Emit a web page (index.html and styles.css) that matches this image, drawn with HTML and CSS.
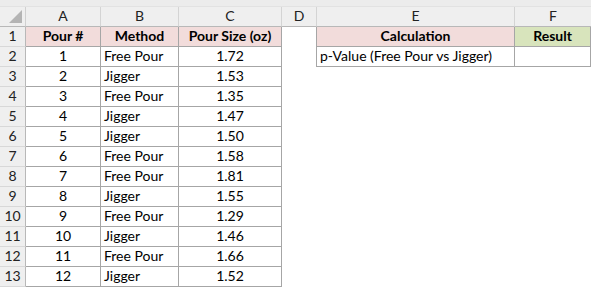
FILE: index.html
```html
<!DOCTYPE html>
<html>
<head>
<meta charset="utf-8">
<link rel="stylesheet" href="styles.css">
</head>
<body>
<div class="strip"></div>
<div class="sheet">
  <div class="corner"><svg class="tri" width="13" height="13" viewBox="0 0 13 13"><polygon points="13,0 13,13 0,13" fill="#b4b4b4"/></svg></div>
  <div class="ch">A</div><div class="ch">B</div><div class="ch">C</div><div class="ch">D</div><div class="ch">E</div><div class="ch last">F</div>

  <div class="rh">1</div>
  <div class="c t hd ctr">Pour #</div><div class="c t hd ctr">Method</div><div class="c t hd ctr">Pour Size (oz)</div>
  <div class="c dt"></div><div class="c t hd ctr">Calculation</div><div class="c t hdg ctr">Result</div>

  <div class="rh">2</div>
  <div class="c t ctr">1</div><div class="c t">Free Pour</div><div class="c t ctr">1.72</div>
  <div class="c dt"></div><div class="c t">p-Value (Free Pour vs Jigger)</div><div class="c t"></div>

  <div class="rh">3</div>
  <div class="c t ctr">2</div><div class="c t">Jigger</div><div class="c t ctr">1.53</div><div class="c"></div><div class="c"></div><div class="c"></div>
  <div class="rh">4</div>
  <div class="c t ctr">3</div><div class="c t">Free Pour</div><div class="c t ctr">1.35</div><div class="c"></div><div class="c"></div><div class="c"></div>
  <div class="rh">5</div>
  <div class="c t ctr">4</div><div class="c t">Jigger</div><div class="c t ctr">1.47</div><div class="c"></div><div class="c"></div><div class="c"></div>
  <div class="rh">6</div>
  <div class="c t ctr">5</div><div class="c t">Jigger</div><div class="c t ctr">1.50</div><div class="c"></div><div class="c"></div><div class="c"></div>
  <div class="rh">7</div>
  <div class="c t ctr">6</div><div class="c t">Free Pour</div><div class="c t ctr">1.58</div><div class="c"></div><div class="c"></div><div class="c"></div>
  <div class="rh">8</div>
  <div class="c t ctr">7</div><div class="c t">Free Pour</div><div class="c t ctr">1.81</div><div class="c"></div><div class="c"></div><div class="c"></div>
  <div class="rh">9</div>
  <div class="c t ctr">8</div><div class="c t">Jigger</div><div class="c t ctr">1.55</div><div class="c"></div><div class="c"></div><div class="c"></div>
  <div class="rh">10</div>
  <div class="c t ctr">9</div><div class="c t">Free Pour</div><div class="c t ctr">1.29</div><div class="c"></div><div class="c"></div><div class="c"></div>
  <div class="rh">11</div>
  <div class="c t ctr">10</div><div class="c t">Jigger</div><div class="c t ctr">1.46</div><div class="c"></div><div class="c"></div><div class="c"></div>
  <div class="rh">12</div>
  <div class="c t ctr">11</div><div class="c t">Free Pour</div><div class="c t ctr">1.66</div><div class="c"></div><div class="c"></div><div class="c"></div>
  <div class="rh">13</div>
  <div class="c t ctr">12</div><div class="c t">Jigger</div><div class="c t ctr">1.52</div><div class="c"></div><div class="c"></div><div class="c"></div>
</div>
</body>
</html>
```

FILE: styles.css
```css
html, body {
  margin: 0;
  padding: 0;
  background: #ffffff;
}
body {
  width: 591px;
  height: 288px;
  overflow: hidden;
  font-family: Lato, "Open Sans", sans-serif;
  font-size: 14px;
  color: #000;
}
.strip {
  height: 6px;
  background: #ececec;
  border-bottom: 1px solid #e2e2e2;
}
.sheet {
  display: grid;
  grid-template-columns: 26px 75px 78px 103px 35px 198px 76px;
  grid-auto-rows: 20px;
}
.corner {
  background: #efefef;
  border-right: 1px solid #d0d0d0;
  border-bottom: 1px solid #b8b8b8;
  display: flex;
  align-items: flex-end;
  justify-content: flex-end;
  padding: 0 3px 3px 0;
}
.tri { display: block; }
.ch {
  background: #efefef;
  border-right: 1px solid #d4d4d4;
  border-bottom: 1px solid #b8b8b8;
  display: flex;
  align-items: flex-end;
  justify-content: center;
  padding-bottom: 2px;
  color: #222;
}
.ch.last { border-right: none; }
.rh {
  background: #efefef;
  border-right: 1px solid #b8b8b8;
  border-bottom: 1px solid #d8d8d8;
  display: flex;
  align-items: flex-end;
  justify-content: center;
  padding-bottom: 2px;
  color: #222;
}
.c {
  display: flex;
  align-items: flex-end;
  padding: 0 3px 2px 3px;
  white-space: nowrap;
  overflow: hidden;
}
.t {
  border-right: 1px solid #a6a6a6;
  border-bottom: 1px solid #a6a6a6;
}
.dt {
  border-right: 1px solid #a6a6a6;
}
.ctr { justify-content: center; }
.hd {
  background: #f2dcdb;
  font-weight: bold;
}
.hdg {
  background: #d8e4bc;
  font-weight: bold;
}
```
